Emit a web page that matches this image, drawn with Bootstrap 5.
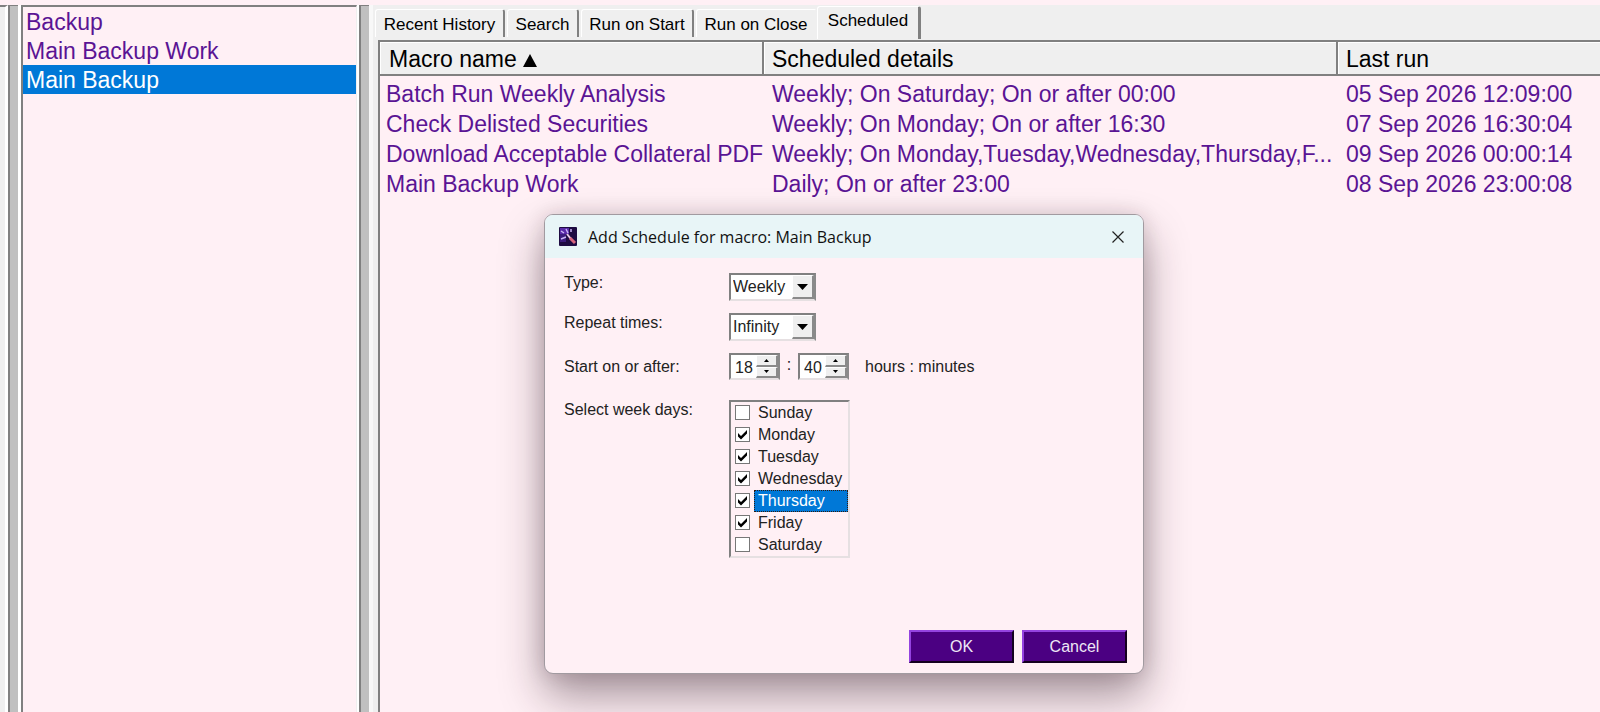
<!DOCTYPE html>
<html lang="en">
<head>
<meta charset="utf-8">
<meta name="viewport" content="width=device-width, initial-scale=1">
<title>Macro scheduler</title>
<link href="https://cdn.jsdelivr.net/npm/bootstrap@5.3.0/dist/css/bootstrap.min.css" rel="stylesheet">
<style>
  :root { --pink: #fff0f5; --face: #efefef; --shade: #808080; --pick: #0078d7; --ink: #5a1494; }
  body { font-family: "Liberation Sans", Arial, sans-serif; background: var(--pink); color: #000; }
  .shell { min-height: 100vh; padding-top: 5px; overflow: hidden; }
  .edge-pane { width: 8px; background: var(--face); border-top: 2px solid var(--shade); border-right: 3px solid #fff; }
  .splitter { width: 10px; background: #c0c0c0; border-left: 2px solid var(--shade); border-top: 1px solid var(--shade); }
  .macro-pane { width: 341px; padding: 0 2px 0 3px; background: #fff; }
  .macro-box { border: 2px solid var(--shade); border-right: 1px solid var(--face); border-bottom: 0; background: var(--pink); }
  .macro-box a { display: block; height: 29px; line-height: 30px; padding-left: 3px; font-size: 23px; color: var(--ink); text-decoration: none; }
  .macro-box a.active { background: var(--pick); color: #fff; }
  .main-pane { background: var(--face); border-left: 4px solid #f8f8f8; }
  .tab-strip { height: 35px; padding: 1px 0 0 2px; }
  .tab-strip button { height: 28px; border: 0; border-top: 1px solid #fff; border-left: 1px solid #fff; border-right: 2px solid var(--shade);
    border-radius: 3px 3px 0 0; background: var(--face); color: #000; font-size: 17px; line-height: 24px; padding: 2px 0 0; text-align: center; margin-right: 2px; }
  .tab-strip button.active { height: 33px; margin-left: -2px; padding-bottom: 6px; align-self: flex-start; border-right-width: 3px; }
  .tab-strip button.before-active { border-right-color: var(--face); }
  .grid-box { border-top: 2px solid var(--shade); border-left: 2px solid var(--shade); margin-left: 5px; background: var(--pink); }
  .runs { table-layout: fixed; width: 100%; font-size: 23px; color: var(--ink); border-collapse: separate; border-spacing: 0; }
  .runs th { height: 34px; font-weight: 400; color: #000; line-height: 28px; background: var(--face); padding: 2px 8px 0; white-space: nowrap;
    border: 0 solid var(--shade); border-right-width: 2px; border-bottom-width: 2px; box-shadow: inset 1px 1px #fff; }
  .runs th:first-child { padding-left: 9px; }
  .runs th:last-child { border-right-width: 0; }
  .runs td { height: 30px; line-height: 30px; padding: 0 0 0 8px; white-space: nowrap; }
  .runs td:first-child { padding-left: 6px; }
  .runs tbody::before { content: ""; display: block; height: 3px; }
  .dialog-box { position: absolute; top: 214px; left: 34%; width: 600px; border: 1px solid #a19aa0; border-radius: 9px; overflow: hidden;
    background: var(--pink); font-size: 16px; color: #222; box-shadow: 0 22px 44px rgba(40, 20, 30, .42), 0 0 20px rgba(40, 20, 30, .14); }
  .dialog-head { height: 43px; padding: 0 18px 0 14px; background: #e8f5f7; }
  .dialog-head h1 { font-family: "Open Sans", sans-serif; font-size: 16px; line-height: 24px; font-weight: 400; color: #111; margin: 0 0 0 11px; }
  .dialog-head button { border: 0; background: none; padding: 0; line-height: 0; }
  .fields { padding: 15px 16px 10px 19px; }
  .field-row { display: grid; grid-template-columns: 165px 1fr; align-items: start; }
  .field-name { line-height: 20px; }
  .well { border: 2px solid var(--shade); border-right-color: #e6e0e2; border-bottom-color: #e6e0e2; background: #fff; }
  .drop { position: relative; width: 87px; height: 28px; border-right-color: #8a8a8a; }
  .drop select { appearance: none; width: 100%; height: 24px; border: 0; background: #fff; padding: 0 0 0 2px; font-size: 16px; line-height: 24px; color: #222; }
  .drop span { position: absolute; right: 0; top: 0; bottom: 0; width: 22px; pointer-events: none; }
  .raised { background: var(--face); border: 1px solid #fff; border-right: 2px solid #8a8a8a; border-bottom: 2px solid #8a8a8a; }
  .spin { width: 51px; height: 27px; border-right-color: #8a8a8a; }
  .spin input { appearance: textfield; -moz-appearance: textfield; width: 25px; border: 0; padding: 3px 0 0 4px; font-size: 16px; color: #222; }
  .spin input::-webkit-inner-spin-button { appearance: none; }
  .spin button { width: 22px; flex: 1 1 0; min-height: 0; padding: 0; line-height: 0; }
  .days { width: 121px; background: var(--pink); }
  .days label { height: 22px; }
  .days input { appearance: none; width: 15px; height: 15px; margin: 3px 4px 0 4px; border: 1px solid #777; background: #fff; flex: none; }
  .days input:checked { background: #fff url("data:image/svg+xml,%3Csvg xmlns='http://www.w3.org/2000/svg' viewBox='0 0 13 13'%3E%3Cpath d='M2 5v3.5l3 3 6-6V2L5 8z'/%3E%3C/svg%3E"); }
  .days span { flex: 1; line-height: 20px; height: 22px; padding-left: 3px; border: 1px solid transparent; }
  .days .active span { background: var(--pick); color: #fff; border: 1px dotted #301a10; }
  .act { width: 105px; height: 33px; border: 2px solid #15001f; border-top-color: #9443e0; border-left-color: #9443e0; background: #4b0082; color: #eee6f5; font-size: 16px; line-height: 24px; padding: 0; }
</style>
</head>
<body>
<div class="shell d-flex position-relative">
  <div class="edge-pane flex-shrink-0"></div>
  <div class="splitter flex-shrink-0"></div>
  <nav class="macro-pane d-flex flex-shrink-0" aria-label="Macros">
    <div class="macro-box flex-grow-1">
      <a href="#">Backup</a>
      <a href="#">Main Backup Work</a>
      <a href="#" class="active">Main Backup</a>
    </div>
  </nav>
  <div class="splitter flex-shrink-0"></div>
  <main class="main-pane flex-grow-1 d-flex flex-column">
    <div class="tab-strip d-flex align-items-center" role="tablist">
      <button type="button" role="tab" style="width:130px">Recent History</button>
      <button type="button" role="tab" style="width:72px">Search</button>
      <button type="button" role="tab" style="width:113px">Run on Start</button>
      <button type="button" role="tab" class="before-active" style="width:121px">Run on Close</button>
      <button type="button" role="tab" class="active" aria-selected="true" style="width:104px">Scheduled</button>
    </div>
    <div class="grid-box flex-grow-1">
      <table class="runs">
        <colgroup><col style="width:384px"><col style="width:574px"><col></colgroup>
        <thead><tr>
          <th>Macro name <svg width="14" height="13" viewBox="0 0 14 13" aria-hidden="true"><path d="M7 0l7 13H0z"/></svg></th>
          <th>Scheduled details</th><th>Last run</th></tr></thead>
        <tbody>
          <tr><td>Batch Run Weekly Analysis</td><td>Weekly; On Saturday; On or after 00:00</td><td>05 Sep 2026 12:09:00</td></tr>
          <tr><td>Check Delisted Securities</td><td>Weekly; On Monday; On or after 16:30</td><td>07 Sep 2026 16:30:04</td></tr>
          <tr><td>Download Acceptable Collateral PDF</td><td>Weekly; On Monday,Tuesday,Wednesday,Thursday,F...</td><td>09 Sep 2026 00:00:14</td></tr>
          <tr><td>Main Backup Work</td><td>Daily; On or after 23:00</td><td>08 Sep 2026 23:00:08</td></tr>
        </tbody>
      </table>
    </div>
  </main>

  <form class="dialog-box" role="dialog" aria-labelledby="dlg-title">
    <header class="dialog-head d-flex align-items-center">
      <svg width="18" height="19" viewBox="0 0 18 19" aria-hidden="true"><rect width="18" height="19" rx="1" fill="#1e0b42"/><path d="M1 1h9v6H1z" fill="#5a2aa8"/><path d="M1 7h6v8H1z" fill="#3c1c7c"/><path d="M2 12l5-2M2 4l3 2M7 2l2 4M12 2v3" stroke="#c9b4f5" stroke-width="1.500"/><path d="M8 7l4 5" stroke="#e8c8e8" stroke-width="2"/><path d="M11 11l5 5" stroke="#d8657e" stroke-width="3"/></svg>
      <h1 id="dlg-title">Add Schedule for macro: Main Backup</h1>
      <button type="button" class="ms-auto" aria-label="Close"><svg width="14" height="14" viewBox="0 0 14 14"><path d="M1.500 1.500l11 11m0-11l-11 11" stroke="#222" stroke-width="1.200"/></svg></button>
    </header>
    <div class="fields">
      <div class="field-row mb-2 pb-1">
        <label class="field-name" for="kind">Type:</label>
        <div class="well drop"><select id="kind"><option>Weekly</option><option>Daily</option></select>
          <span class="raised d-flex align-items-center justify-content-center"><svg width="11" height="6" viewBox="0 0 11 6"><path d="M0 0h11L5.500 6z"/></svg></span></div>
      </div>
      <div class="field-row mb-2">
        <label class="field-name" for="times">Repeat times:</label>
        <div class="well drop"><select id="times"><option>Infinity</option></select>
          <span class="raised d-flex align-items-center justify-content-center"><svg width="11" height="6" viewBox="0 0 11 6"><path d="M0 0h11L5.500 6z"/></svg></span></div>
      </div>
      <div class="field-row pt-1 mb-3">
        <label class="field-name pt-1" for="hours">Start on or after:</label>
        <div class="d-flex">
          <div class="well spin d-flex"><input type="number" id="hours" value="18">
            <div class="d-flex flex-column"><button type="button" class="raised" aria-label="Hours up"><svg width="5" height="3" viewBox="0 0 5 3"><path d="M0 3h5L2.500 0z"/></svg></button><button type="button" class="raised" aria-label="Hours down"><svg width="5" height="3" viewBox="0 0 5 3"><path d="M0 0h5L2.500 3z"/></svg></button></div></div>
          <span class="text-center" style="width:18px">:</span>
          <div class="well spin d-flex"><input type="number" id="minutes" value="40" aria-label="Minutes">
            <div class="d-flex flex-column"><button type="button" class="raised" aria-label="Minutes up"><svg width="5" height="3" viewBox="0 0 5 3"><path d="M0 3h5L2.500 0z"/></svg></button><button type="button" class="raised" aria-label="Minutes down"><svg width="5" height="3" viewBox="0 0 5 3"><path d="M0 0h5L2.500 3z"/></svg></button></div></div>
          <span class="field-name pt-1 ms-3">hours : minutes</span>
        </div>
      </div>
      <div class="field-row pt-1 mt-1">
        <span class="field-name" id="days-name">Select week days:</span>
        <div class="well days" role="group" aria-labelledby="days-name">
          <label class="d-flex"><input type="checkbox"><span>Sunday</span></label>
          <label class="d-flex"><input type="checkbox" checked><span>Monday</span></label>
          <label class="d-flex"><input type="checkbox" checked><span>Tuesday</span></label>
          <label class="d-flex"><input type="checkbox" checked><span>Wednesday</span></label>
          <label class="d-flex active"><input type="checkbox" checked><span>Thursday</span></label>
          <label class="d-flex"><input type="checkbox" checked><span>Friday</span></label>
          <label class="d-flex"><input type="checkbox"><span>Saturday</span></label>
        </div>
      </div>
      <div class="d-flex justify-content-end gap-2 pt-4 mt-5">
        <button type="submit" class="act">OK</button>
        <button type="button" class="act">Cancel</button>
      </div>
    </div>
  </form>
</div>
<script src="https://cdn.jsdelivr.net/npm/bootstrap@5.3.0/dist/js/bootstrap.bundle.min.js"></script>
</body>
</html>
